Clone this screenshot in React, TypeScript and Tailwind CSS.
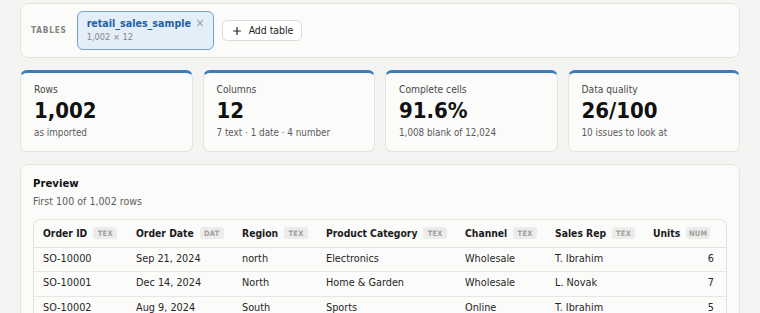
import React from "react"

type Stat = { label: string; value: string; note: string }

const stats: Stat[] = [
  { label: "Rows", value: "1,002", note: "as imported" },
  { label: "Columns", value: "12", note: "7 text · 1 date · 4 number" },
  { label: "Complete cells", value: "91.6%", note: "1,008 blank of 12,024" },
  { label: "Data quality", value: "26/100", note: "10 issues to look at" },
]

const columns = [
  { name: "Order ID", tag: "TEX", width: "w-[93px]" },
  { name: "Order Date", tag: "DAT", width: "w-[106px]" },
  { name: "Region", tag: "TEX", width: "w-[84px]" },
  { name: "Product Category", tag: "TEX", width: "w-[139px]" },
  { name: "Channel", tag: "TEX", width: "w-[90px]" },
  { name: "Sales Rep", tag: "TEX", width: "w-[98px]" },
  { name: "Units", tag: "NUM", width: "w-[82px]" },
]

const rows = [
  ["SO-10000", "Sep 21, 2024", "north", "Electronics", "Wholesale", "T. Ibrahim", "6"],
  ["SO-10001", "Dec 14, 2024", "North", "Home & Garden", "Wholesale", "L. Novak", "7"],
  ["SO-10002", "Aug 9, 2024", "South", "Sports", "Online", "T. Ibrahim", "5"],
]

function StatCard({ stat }: { stat: Stat }) {
  return (
    <div className="flex flex-col rounded-[7px] border border-[#e3e3df] border-t-[3px] border-t-[#3b7cbc] bg-[#fbfbfa] px-[13px] pt-[11px] pb-[12px]">
      <div className="h-[12px] text-[10.2px] leading-[12px] text-[#4a4a4a]">{stat.label}</div>
      <div className="mt-[3px] h-[24px] text-[22px] font-bold leading-[24px] text-[#111]">{stat.value}</div>
      <div className="mt-[4px] h-[12px] text-[9.8px] leading-[12px] text-[#5a5a5a]">{stat.note}</div>
    </div>
  )
}

export default function App() {
  return (
    <div
      className="h-[313px] overflow-hidden bg-[#f4f4f2] px-[20px] pt-[3px]"
      style={{ fontFamily: '"DejaVu Sans Condensed", "DejaVu Sans", Verdana, sans-serif' }}
    >
      {/* Tables bar */}
      <div className="flex h-[55px] items-center rounded-[8px] border border-[#e3e3df] bg-[#fbfbfa] pl-[10px]">
        <span className="text-[8.3px] font-bold uppercase leading-none tracking-[0.09em] text-[#858585]">Tables</span>
        <div className="ml-[10px] flex w-[137px] flex-col rounded-[6px] border border-[#70a1cf] bg-[#e3eef9] pt-[5px] pb-[6px] pl-[9px] pr-[8px]">
          <div className="flex h-[13px] items-center justify-between">
            <span className="text-[10.6px] font-bold leading-[13px] text-[#1f62a7]">retail_sales_sample</span>
            <span className="text-[12px] leading-[13px] text-[#9a9a9a]">×</span>
          </div>
          <div className="mt-[1px] h-[12px] text-[9.2px] leading-[12px] text-[#858585]">1,002 × 12</div>
        </div>
        <button className="ml-[8px] flex h-[21px] items-center gap-[8px] rounded-[5px] border border-[#dcdcd8] bg-white pl-[10px] pr-[8px] text-[10.4px] leading-none text-[#222]">
          <svg width="8" height="8" viewBox="0 0 8 8" fill="none" stroke="#222" strokeWidth="1.2" strokeLinecap="round">
            <path d="M4 0.6v6.8M0.6 4h6.8" />
          </svg>
          Add table
        </button>
      </div>

      {/* Summary cards */}
      <div className="mt-[12px] grid grid-cols-4 gap-[10px]">
        {stats.map((s) => (
          <StatCard key={s.label} stat={s} />
        ))}
      </div>

      {/* Preview */}
      <div className="mt-[12px] rounded-[8px] border border-[#e3e3df] bg-[#fbfbfa] px-[12px] pt-[12px] pb-[12px]">
        <div className="h-[14px] text-[11.3px] font-bold leading-[14px] text-[#111]">Preview</div>
        <div className="mt-[4px] h-[13px] text-[10.6px] leading-[13px] text-[#5e5e5e]">First 100 of 1,002 rows</div>
        <div className="mt-[11px] overflow-hidden rounded-[7px] border border-[#e3e3df]">
          <table className="w-full table-fixed border-collapse">
            <colgroup>
              {columns.map((c) => (
                <col key={c.name} className={c.width} />
              ))}
            </colgroup>
            <thead>
              <tr className="h-[27px] border-b border-[#e3e3df]">
                {columns.map((c) => (
                  <th key={c.name} className="px-[9px] text-left align-middle">
                    <div className="flex items-center gap-[6px] whitespace-nowrap">
                      <span className="text-[10.3px] font-bold leading-none text-[#1a1a1a]">{c.name}</span>
                      <span className="flex h-[12px] w-[24px] items-center justify-center rounded-[3px] bg-[#ececea] text-[7.4px] font-bold leading-none tracking-[0.04em] text-[#a0a0a0]">
                        {c.tag}
                      </span>
                    </div>
                  </th>
                ))}
              </tr>
            </thead>
            <tbody>
              {rows.map((r) => (
                <tr key={r[0]} className="h-[24.5px] border-b border-[#e6e6e2]">
                  {r.map((v, i) => (
                    <td
                      key={i}
                      className={
                        i === r.length - 1
                          ? "pr-[12px] text-right text-[10.8px] leading-none text-[#262626]"
                          : "px-[9px] whitespace-nowrap text-[10.8px] leading-none text-[#262626]"
                      }
                    >
                      {v}
                    </td>
                  ))}
                </tr>
              ))}
            </tbody>
          </table>
        </div>
      </div>
    </div>
  )
}
